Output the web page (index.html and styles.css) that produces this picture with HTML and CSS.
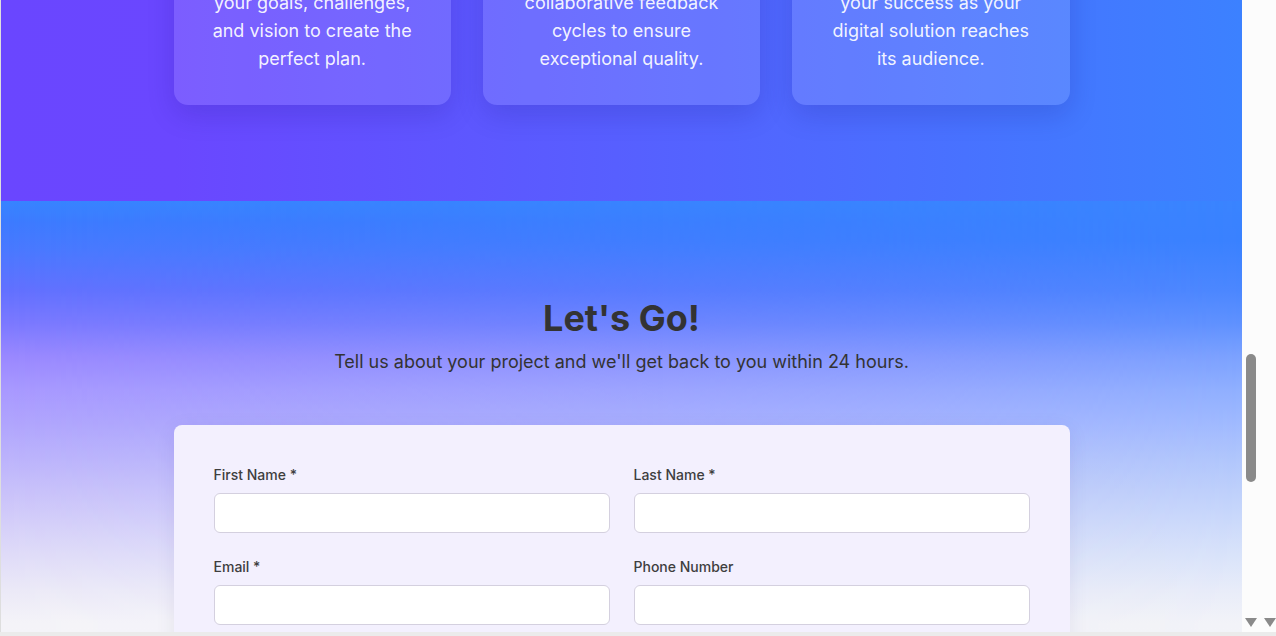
FILE: index.html
```html
<!DOCTYPE html>
<html lang="en">
<head>
<meta charset="utf-8">
<title>Let's Go!</title>
<link rel="stylesheet" href="styles.css">
</head>
<body>
<div class="window">
  <div class="frame">
    <div class="viewport" id="viewport">
      <section class="process">
        <div class="cards">
          <article class="card">
            <div class="card-icon">1</div>
            <h3>Discovery</h3>
            <p>Through research and interviews, we explore your goals, challenges, and vision to create the perfect plan.</p>
          </article>
          <article class="card">
            <div class="card-icon">2</div>
            <h3>Design &amp; Build</h3>
            <p>Our experts design and develop through collaborative feedback cycles to ensure exceptional quality.</p>
          </article>
          <article class="card">
            <div class="card-icon">3</div>
            <h3>Launch &amp; Grow</h3>
            <p>Post-launch, we monitor and proudly celebrate your success as your digital solution reaches its audience.</p>
          </article>
        </div>
      </section>

      <section class="contact" id="contact">
        <div class="contact-inner">
          <h2>Let's Go!</h2>
          <p class="lead">Tell us about your project and we'll get back to you within 24 hours.</p>
          <form class="form-card">
            <div class="row">
              <div class="field">
                <label for="first">First Name *</label>
                <input id="first" type="text">
              </div>
              <div class="field">
                <label for="last">Last Name *</label>
                <input id="last" type="text">
              </div>
            </div>
            <div class="row">
              <div class="field">
                <label for="email">Email *</label>
                <input id="email" type="email">
              </div>
              <div class="field">
                <label for="phone">Phone Number</label>
                <input id="phone" type="tel">
              </div>
            </div>
            <div class="field">
              <label for="msg">Project Details *</label>
              <textarea id="msg" rows="5"></textarea>
            </div>
            <button type="button" class="submit">Send Message</button>
          </form>
        </div>
      </section>
    </div>
    <div class="scrollbar" aria-hidden="true">
      <div class="thumb"></div>
      <div class="arrow arrow-a"></div>
      <div class="arrow arrow-b"></div>
    </div>
  </div>
  <div class="hbar"></div>
</div>
<script src="script.js"></script>
</body>
</html>
```

FILE: styles.css
```css
* { box-sizing: border-box; }

html, body {
  margin: 0;
  height: 100%;
  overflow: hidden;
}

body {
  font-family: Inter, "Noto Sans", "Liberation Sans", sans-serif;
  background: #ffffff;
  color: #333333;
}

.window {
  display: flex;
  flex-direction: column;
  height: 636px;
}

.frame {
  display: flex;
  height: 632px;
  border-left: 1px solid #dedede;
}

.viewport {
  flex: 1;
  position: relative;
  overflow: hidden;
}

/* ---------- process section ---------- */
.process {
  padding: 96px 24px;
  background: linear-gradient(90deg, #6a46ff 0%, #6a47ff 14%, #3c81ff 100%);
}

.cards {
  max-width: 896px;
  margin: 0 auto;
  display: grid;
  grid-template-columns: repeat(3, 1fr);
  gap: 32px;
}

.card {
  background: rgba(255, 255, 255, 0.12);
  border-radius: 14px;
  padding: 32px;
  text-align: center;
  color: rgba(255, 255, 255, 0.93);
  box-shadow: 0 10px 28px rgba(20, 10, 110, 0.16);
}

.card-icon {
  width: 64px;
  height: 64px;
  margin: 0 auto 20px;
  border-radius: 50%;
  background: rgba(255, 255, 255, 0.2);
  display: flex;
  align-items: center;
  justify-content: center;
  font-size: 26px;
  font-weight: 700;
}

.card h3 {
  margin: 0 0 12px;
  font-size: 22px;
  font-weight: 700;
  color: #ffffff;
}

.card p {
  margin: 0;
  font-size: 18px;
  line-height: 28px;
}

/* ---------- contact section ---------- */
.contact {
  position: relative;
  padding: 96px 24px;
  background: linear-gradient(180deg,
    #3a84ff 0px,
    #3a82ff 40px,
    #4c88ff 90px,
    #5f92ff 122px,
    #7ca2ff 156px,
    #90b0ff 189px,
    #a0baff 222px,
    #b0c6fc 256px,
    #bed0fb 289px,
    #ccdafb 322px,
    #dae4fa 356px,
    #e8ecf9 389px,
    #f2f3f8 422px,
    #f6f6f9 600px);
}

.contact::before {
  content: "";
  position: absolute;
  inset: 0;
  background: linear-gradient(180deg,
    #3784ff 0px,
    #3d7aff 22px,
    #4a78ff 49px,
    #6270ff 89px,
    #7b78ff 122px,
    #9a88ff 156px,
    #a898ff 189px,
    #b0a4fd 222px,
    #bbb2fc 256px,
    #c8c0fa 289px,
    #d4cef9 322px,
    #e0dcf8 356px,
    #ebe9f7 389px,
    #f4f3f8 422px,
    #f6f6f9 600px);
  -webkit-mask-image: linear-gradient(90deg, #000 0%, rgba(0, 0, 0, 0.35) 70%, rgba(0, 0, 0, 0) 100%);
  mask-image: linear-gradient(90deg, #000 0%, rgba(0, 0, 0, 0.35) 70%, rgba(0, 0, 0, 0) 100%);
}

.contact-inner {
  position: relative;
  max-width: 896px;
  margin: 0 auto;
  text-align: center;
}

.contact h2 {
  margin: 0 0 8px;
  font-size: 36px;
  line-height: 1.2;
  font-weight: 700;
  color: #333333;
}

.lead {
  margin: 0 0 48px;
  font-size: 18px;
  line-height: 1.6;
  color: #333333;
}

.form-card {
  background: #f3f0fe;
  border-radius: 8px;
  padding: 40px;
  text-align: left;
  box-shadow: 0 4px 20px rgba(40, 30, 120, 0.08);
}

.row {
  display: grid;
  grid-template-columns: 1fr 1fr;
  gap: 24px;
  margin-bottom: 24px;
}

.field label {
  display: block;
  margin-bottom: 8px;
  font-size: 14px;
  line-height: 20px;
  font-weight: 500;
  color: #3e3e3e;
}

.field input,
.field textarea {
  display: block;
  width: 100%;
  height: 40px;
  padding: 8px 12px;
  border: 1px solid #d4d0df;
  border-radius: 6px;
  background: #ffffff;
  font: inherit;
}

.field textarea {
  height: 120px;
  resize: none;
}

.submit {
  margin-top: 24px;
  padding: 12px 28px;
  border: 0;
  border-radius: 6px;
  background: #6a46ff;
  color: #ffffff;
  font: 600 16px Inter, sans-serif;
}

/* ---------- fake scrollbar ---------- */
.scrollbar {
  position: relative;
  width: 34px;
  background: #fcfcfc;
}

.thumb {
  position: absolute;
  left: 4px;
  top: 354px;
  width: 10px;
  height: 128px;
  border-radius: 5px;
  background: #8a8a8a;
}

.arrow {
  position: absolute;
  top: 618px;
  width: 0;
  height: 0;
  border-left: 6px solid transparent;
  border-right: 6px solid transparent;
  border-top: 9px solid #8a8a8a;
}

.arrow-a { left: 3px; }
.arrow-b { left: 22px; }

.hbar {
  height: 4px;
  background: #ebebeb;
}
```

FILE: script.js
```js
(function () {
  var vp = document.getElementById('viewport');
  var contact = document.getElementById('contact');
  vp.scrollTop = contact.offsetTop - 201;
})();
```
